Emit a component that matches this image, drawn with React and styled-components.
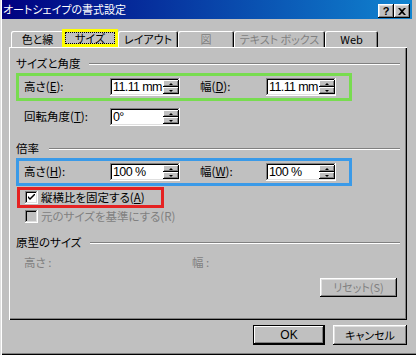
import styled, { createGlobalStyle, css } from "styled-components"

const GlobalStyle = createGlobalStyle`
  html, body {
    margin: 0;
    padding: 0;
    background: #c0c0c0;
  }
  body {
    font-family: "Noto Sans CJK JP", "Liberation Sans", sans-serif;
    font-size: 11.5px;
    font-feature-settings: "palt";
    color: #000;
  }
  * {
    box-sizing: border-box;
  }
`;

const raised = css`
  box-shadow: inset -1px -1px #000, inset 1px 1px #fff, inset -2px -2px #808080, inset 2px 2px #dfdfdf;
`;

const sunken = css`
  box-shadow: inset -1px -1px #fff, inset 1px 1px #808080, inset -2px -2px #dfdfdf, inset 2px 2px #000;
`;

const Window = styled.div`
  width: 416px;
  height: 355px;
  background: #c0c0c0;
  padding: 0 4px 0 2px;
  display: flex;
  flex-direction: column;
  overflow: hidden;
  box-shadow: inset 1px 0 #dfdfdf, inset 2px 0 #fff, inset 0 -1px #000, inset 0 -2px #808080;
`;

const TitleBar = styled.div`
  height: 19px;
  display: flex;
  align-items: flex-start;
  padding: 0 2px 0 1px;
  background: linear-gradient(90deg, #000080, #1084d0);
  color: #fff;
`;

const Title = styled.span`
  flex: 1;
  font-size: 11px;
  line-height: 1;
  padding-top: 4px;
  white-space: nowrap;
`;

const CaptionButton = styled.div`
  width: 16px;
  height: 14px;
  margin-top: 4px;
  background: #c0c0c0;
  ${raised};
  display: flex;
  align-items: center;
  justify-content: center;
  font-family: "Liberation Sans", sans-serif;
  font-weight: bold;
  font-size: 11px;
  color: #000;
  line-height: 1;
`;

const TabStrip = styled.div`
  display: flex;
  align-items: flex-end;
  height: 19px;
  margin: 9px 0 0 9px;
  position: relative;
  z-index: 1;
  font-size: 11px;
`;

const Tab = styled.div`
  width: ${(p) => p.$w}px;
  height: 16px;
  flex-shrink: 0;
  display: flex;
  align-items: center;
  justify-content: center;
  background: #c0c0c0;
  border-radius: 2px 2px 0 0;
  box-shadow: inset 1px 1px #fff, inset -1px 0 #000, inset -2px 0 #808080;
  color: ${(p) => (p.$disabled ? "#808080" : "#000")};
  white-space: nowrap;
  line-height: 1;
`;

const ActiveTab = styled.div`
  width: ${(p) => p.$w}px;
  height: 18px;
  margin-left: -2px;
  flex-shrink: 0;
  border: 3px solid #ffff00;
  background: #c0c0c0;
  display: flex;
`;

const FocusRing = styled.span`
  flex: 1;
  border: 1px dotted #000;
  display: flex;
  align-items: center;
  justify-content: center;
  line-height: 1;
`;

const Panel = styled.div`
  width: 398px;
  height: 273px;
  margin-left: 7px;
  padding: 0 7px;
  display: flex;
  flex-direction: column;
  box-shadow: inset 1px 1px #fff, inset -1px -1px #000, inset -2px -2px #808080;
`;

const GroupHeader = styled.div`
  display: flex;
  align-items: center;
  height: 16px;
  margin-top: ${(p) => p.$mt}px;
  line-height: 1;
  white-space: nowrap;

  &::after {
    content: "";
    flex: 1;
    margin-left: ${(p) => p.$gap}px;
    border-top: 1px solid #808080;
    border-bottom: 1px solid #fff;
  }
`;

const MarkBox = styled.div`
  width: 336px;
  height: 28px;
  margin-top: 1px;
  border: 3px solid ${(p) => p.$color};
  padding-left: 5px;
  display: flex;
  align-items: center;
`;

const Row = styled.div`
  display: flex;
  align-items: center;
  height: ${(p) => p.$h}px;
  margin-top: ${(p) => p.$mt}px;
  padding-left: ${(p) => p.$pl}px;
`;

const Label = styled.span`
  width: ${(p) => p.$w}px;
  margin-left: ${(p) => p.$ml || 0}px;
  flex-shrink: 0;
  white-space: nowrap;
  line-height: 1;
  color: ${(p) => (p.$disabled ? "#808080" : "#000")};
`;

const Field = styled.div`
  width: 70px;
  height: 18px;
  flex-shrink: 0;
  background: #fff;
  ${sunken};
  display: flex;
  align-items: center;
  padding: 2px 1px 2px 3px;
`;

const FieldText = styled.span`
  flex: 1;
  min-width: 0;
  overflow: hidden;
  white-space: nowrap;
  font-family: "Liberation Sans", sans-serif;
  font-size: 12.5px;
  letter-spacing: -0.6px;
  line-height: 1;
`;

const Spinner = styled.div`
  width: 16px;
  height: 14px;
  flex-shrink: 0;
  display: flex;
  flex-direction: column;
`;

const SpinButton = styled.div`
  flex: 1;
  background: #c0c0c0;
  box-shadow: inset -1px -1px #000, inset 1px 1px #fff, inset -2px -2px #808080;
  display: flex;
  align-items: center;
  justify-content: center;

  &::after {
    content: "";
    border-left: 2px solid transparent;
    border-right: 2px solid transparent;
    ${(p) => (p.$down ? "border-top: 2px solid #000;" : "border-bottom: 2px solid #000;")}
  }
`;

const RedBox = styled.div`
  width: 147px;
  height: 21px;
  margin: 1px 0 0 1px;
  border: 3px solid #e52222;
  padding-left: 5px;
  display: flex;
  align-items: center;
`;

const CheckBox = styled.span`
  width: 13px;
  height: 13px;
  flex-shrink: 0;
  margin-right: 3px;
  background: ${(p) => (p.$disabled ? "#c0c0c0" : "#fff")};
  ${sunken};
  display: flex;
  align-items: center;
  justify-content: center;
`;

const ButtonRow = styled.div`
  display: flex;
  justify-content: flex-end;
  gap: ${(p) => p.$gap || 0}px;
  margin-top: ${(p) => p.$mt}px;
  margin-right: ${(p) => p.$mr}px;
`;

const Button = styled.div`
  width: ${(p) => p.$w}px;
  height: ${(p) => p.$h}px;
  background: #c0c0c0;
  display: flex;
  align-items: center;
  justify-content: center;
  font-family: ${(p) => (p.$latin ? '"Liberation Sans", sans-serif' : "inherit")};
  font-size: ${(p) => (p.$latin ? 12 : 11)}px;
  line-height: 1;
  color: ${(p) => (p.$disabled ? "#808080" : "#000")};
  ${(p) =>
    p.$default
      ? css`
          border: 1px solid #000;
          box-shadow: inset -1px -1px #000, inset 1px 1px #fff, inset -2px -2px #808080;
        `
      : raised};
`;

const Spin = ({ value }) => (
  <Field>
    <FieldText>{value}</FieldText>
    <Spinner>
      <SpinButton />
      <SpinButton $down />
    </Spinner>
  </Field>
);

const CheckMark = () => (
  <svg width="7" height="7" viewBox="0 0 7 7">
    <path d="M0 2 L0 4 L2 6 L7 1 L7 -1 L2 4 Z" fill="#000" />
  </svg>
);

const CloseGlyph = () => (
  <svg width="8" height="7" viewBox="0 0 8 7">
    <path d="M0 0 H2 L4 2 L6 0 H8 L5 3.5 L8 7 H6 L4 5 L2 7 H0 L3 3.5 Z" fill="#000" />
  </svg>
);

export default function App() {
  return (
    <>
      <GlobalStyle />
      <Window>
        <TitleBar>
          <Title>オートシェイプの書式設定</Title>
          <CaptionButton>?</CaptionButton>
          <CaptionButton>
            <CloseGlyph />
          </CaptionButton>
        </TitleBar>

        <TabStrip>
          <Tab $w={53}>色と線</Tab>
          <ActiveTab $w={56}>
            <FocusRing>サイズ</FocusRing>
          </ActiveTab>
          <Tab $w={60}>レイアウト</Tab>
          <Tab $w={56} $disabled>図</Tab>
          <Tab $w={91} $disabled>テキスト ボックス</Tab>
          <Tab $w={53}>Web</Tab>
        </TabStrip>

        <Panel>
          <GroupHeader $mt={9} $gap={9}>サイズと角度</GroupHeader>
          <MarkBox $color="#78dc50">
            <Label $w={86}>高さ(<u>E</u>):</Label>
            <Spin value="11.11 mm" />
            <Label $w={66} $ml={20}>幅(<u>D</u>):</Label>
            <Spin value="11.11 mm" />
          </MarkBox>
          <Row $h={18} $mt={7} $pl={8}>
            <Label $w={86}>回転角度(<u>T</u>):</Label>
            <Spin value="0°" />
          </Row>

          <GroupHeader $mt={15} $gap={10}>倍率</GroupHeader>
          <MarkBox $color="#3a9ae8">
            <Label $w={86}>高さ(<u>H</u>):</Label>
            <Spin value="100 %" />
            <Label $w={66} $ml={20}>幅(<u>W</u>):</Label>
            <Spin value="100 %" />
          </MarkBox>
          <RedBox>
            <CheckBox>
              <CheckMark />
            </CheckBox>
            <Label>縦横比を固定する(<u>A</u>)</Label>
          </RedBox>
          <Row $h={13} $mt={2} $pl={9}>
            <CheckBox $disabled />
            <Label $disabled>元のサイズを基準にする(R)</Label>
          </Row>

          <GroupHeader $mt={12} $gap={9}>原型のサイズ</GroupHeader>
          <Row $h={14} $mt={5} $pl={8}>
            <Label $w={168} $disabled>高さ :</Label>
            <Label $disabled>幅 :</Label>
          </Row>
          <ButtonRow $mt={8} $mr={3}>
            <Button $w={77} $h={19} $disabled>リセット(S)</Button>
          </ButtonRow>
        </Panel>

        <ButtonRow $mt={5} $mr={5} $gap={8}>
          <Button $w={72} $h={20} $latin $default>OK</Button>
          <Button $w={74} $h={20}>キャンセル</Button>
        </ButtonRow>
      </Window>
    </>
  );
}
